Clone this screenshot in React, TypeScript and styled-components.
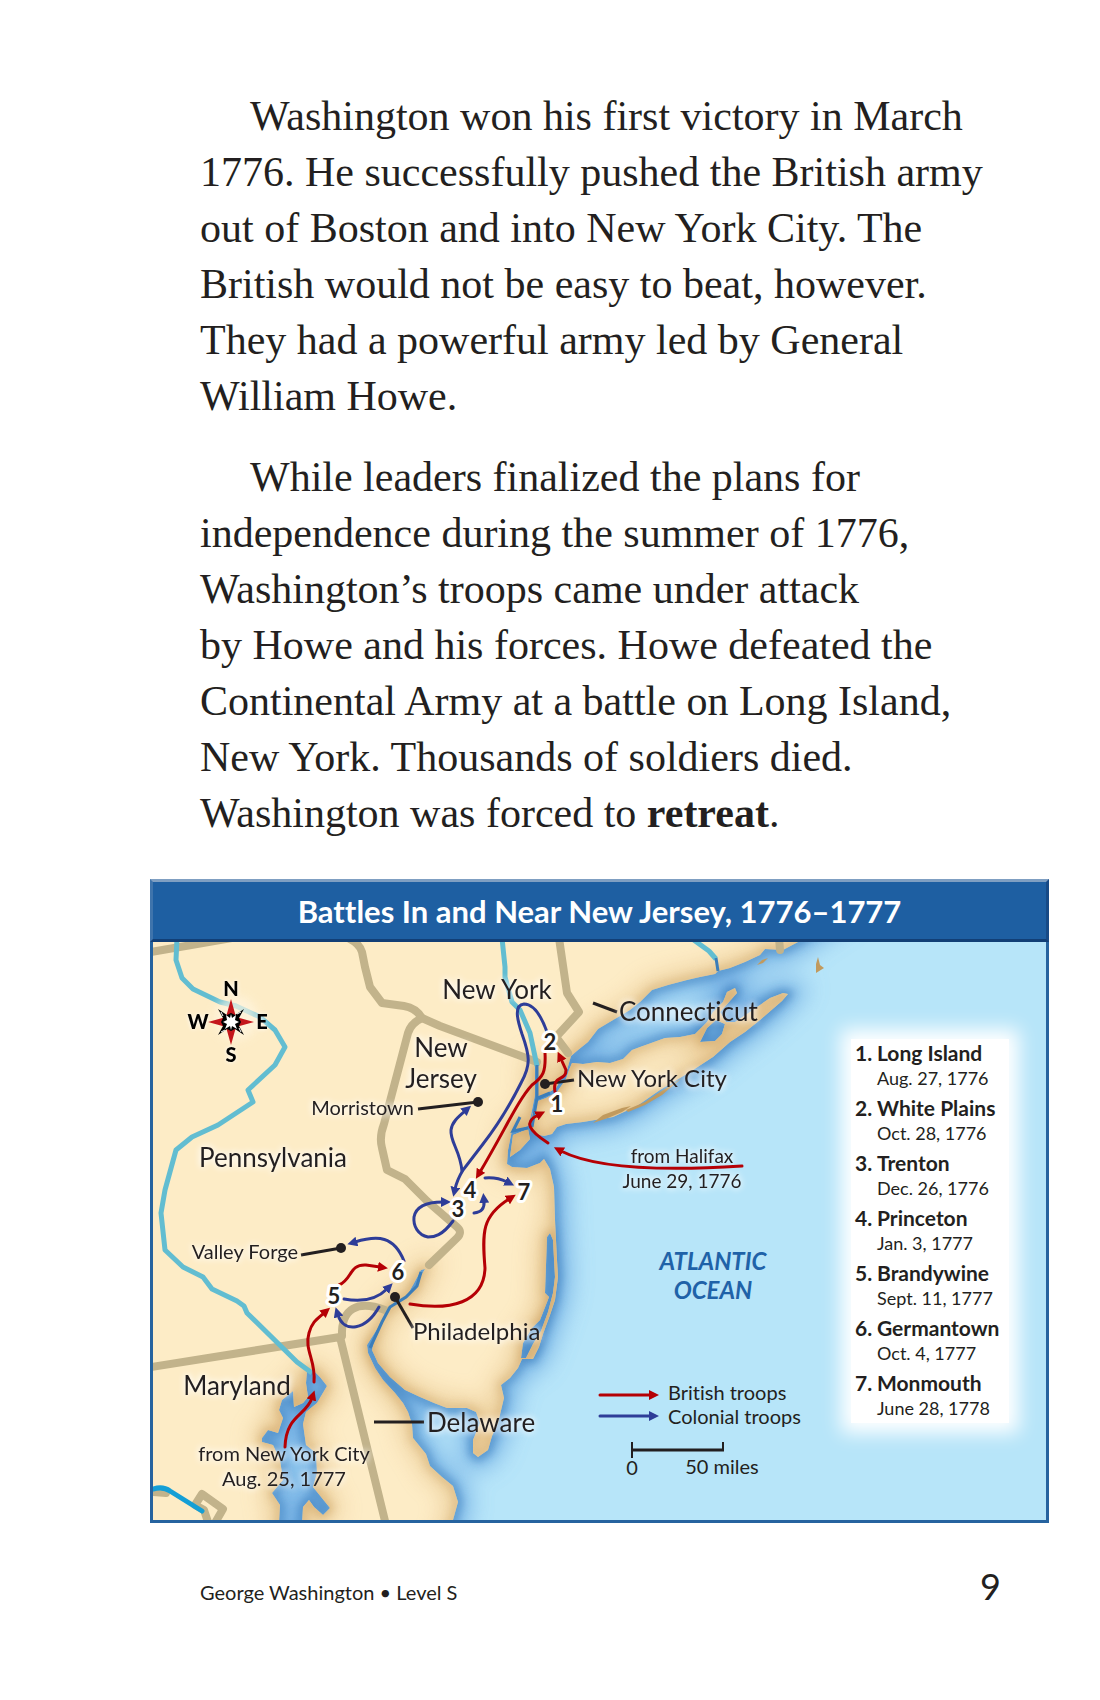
import React from "react";
import styled, { createGlobalStyle } from "styled-components";

const SANS = `Lato, "Open Sans", sans-serif`;
const INK = "#231f20";
const RED = "#b50005";
const BLUE = "#2e3d98";
const BORDER_TAN = "#c2b38b";
const RIVER = "#62bdd1";

const GlobalStyle = createGlobalStyle`
  body {
    margin: 0;
    background: #fff;
    color: ${INK};
    font-variant-ligatures: none;
  }
`;

const Page = styled.main`
  padding: 88px 51px 72px 150px;
`;

const Prose = styled.article`
  padding-left: 50px;
  font-family: "Liberation Serif", "Times New Roman", serif;
  font-size: 42px;
  line-height: 56px;
`;

const Paragraph = styled.p`
  margin: 0 0 25px;
  text-indent: 50px;
`;

const Figure = styled.figure`
  margin: 38px 0 0;
`;

const MapTitle = styled.figcaption`
  box-sizing: border-box;
  height: 63px;
  border-top: 3px solid #7f9fc2;
  border-left: 3px solid #3f74ac;
  border-right: 3px solid #174a86;
  border-bottom: 3px solid #123f76;
  background: #1e5fa2;
  color: #fff;
  font-family: ${SANS};
  font-size: 31px;
  font-weight: bold;
  line-height: 59px;
  text-align: center;
`;

const MapFrame = styled.div`
  display: grid;
  border: 3px solid #26639f;
  border-top: 0;
  background: #b7e5f9;
`;

const MapDrawing = styled.svg`
  grid-area: 1 / 1;
  display: block;
  width: 100%;
  height: auto;
`;

const Label = styled.text<{ $size?: number; $anchor?: string }>`
  font-family: ${SANS};
  font-size: ${(p) => p.$size ?? 26}px;
  text-anchor: ${(p) => p.$anchor ?? "middle"};
  fill: ${INK};
  filter: drop-shadow(0 0 3px rgba(255, 255, 255, 0.9)) drop-shadow(0 0 3px rgba(255, 255, 255, 0.6));
`;

const KeyText = styled.text<{ $anchor?: string }>`
  font-family: ${SANS};
  font-size: 20px;
  text-anchor: ${(p) => p.$anchor ?? "start"};
  fill: ${INK};
`;

const OceanText = styled.text`
  font-family: ${SANS};
  font-size: 24px;
  font-weight: bold;
  font-style: italic;
  text-anchor: middle;
  fill: #1f62a8;
`;

const BattleNumber = styled.text`
  font-family: ${SANS};
  font-size: 22px;
  font-weight: bold;
  text-anchor: middle;
  fill: ${INK};
  stroke: #fff;
  stroke-width: 6px;
  stroke-linejoin: round;
  paint-order: stroke;
`;

const CompassLetter = styled.text`
  font-family: ${SANS};
  font-size: 20px;
  font-weight: 900;
  text-anchor: middle;
  fill: #000;
  filter: drop-shadow(0 0 2px #fff);
`;

const BattleList = styled.ol`
  grid-area: 1 / 1;
  align-self: start;
  justify-self: end;
  box-sizing: border-box;
  width: 158px;
  margin: 97px 37px 0 0;
  padding: 0 0 4px 4px;
  display: grid;
  gap: 5px;
  list-style: none;
  background: #fff;
  box-shadow: 0 0 18px 10px #fff;
  color: ${INK};
`;

const Battle = styled.li`
  display: grid;
  grid-template-columns: 22px 1fr;
`;

const BattleName = styled.strong`
  font-family: ${SANS};
  font-size: 21px;
  line-height: 28px;
  white-space: nowrap;
`;

const BattleDate = styled.span`
  grid-column: 2;
  font-family: ${SANS};
  font-size: 18px;
  line-height: 22px;
  white-space: nowrap;
`;

const Footer = styled.footer`
  display: flex;
  justify-content: space-between;
  align-items: baseline;
  padding: 38px 48px 0 50px;
  font-family: ${SANS};
  font-size: 20px;
  line-height: 50px;
`;

const PageNumber = styled.span`
  font-size: 36px;
`;

const MAIN_LAND =
  "M100 900 L860 900 L798 942 L783 950 L765 949 L760 955 L745 962 L730 968 L718 971 L715 974 L700 977 L687 980 L668 985 L652 990 L640 1002 L630 1010 L620 1016 L608 1023 L598 1029 L588 1042 L578 1050 L571 1056 L567 1070 L563 1076 L556 1088 L546 1094 L538 1096 L538 1064 L535 1064 L535 1095 L531 1115 L528 1126 L514 1131 L520 1117 L512 1130 L508 1150 L507 1164 L512 1167 L527 1168 L540 1163 L544 1159 L550 1169 L554 1187 L555 1220 L557 1260 L558 1277 L555 1300 L550 1315 L543 1334 L539 1347 L533 1359 L522 1359 L518 1368 L510 1378 L501 1385 L504 1398 L498 1423 L492 1436 L488 1450 L478 1457 L473 1453 L473 1440 L480 1423 L476 1412 L467 1408 L447 1408 L434 1403 L420 1397 L405 1390 L390 1377 L378 1363 L372 1350 L375 1338 L383 1317 L392 1307 L404 1299 L416 1289 L419 1279 L425 1269 L421 1270 L413 1285 L406 1297 L396 1301 L386 1311 L379 1326 L367 1345 L368 1353 L375 1368 L383 1380 L395 1393 L403 1403 L408 1412 L412 1424 L413 1438 L426 1454 L430 1466 L442 1477 L453 1486 L458 1502 L453 1520 L440 1560 L100 1560 Z";

const CHESAPEAKE =
  "M307 1371 L313 1370 L320 1377 L327 1386 L317 1403 L306 1412 L303 1424 L306 1445 L316 1453 L317 1473 L313 1487 L330 1508 L323 1515 L314 1507 L309 1500 L303 1507 L300 1560 L277 1560 L280 1505 L272 1493 L283 1480 L280 1460 L273 1445 L262 1442 L262 1438 L268 1430 L278 1433 L283 1418 L279 1410 L282 1400 L293 1391 L294 1407 L303 1403 L308 1397 L306 1383 Z";

const BARNEGAT_BAY =
  "M547 1237 L550 1233 L553 1240 L555 1277 L553 1293 L548 1312 L541 1331 L533 1344 L526 1358 L521 1358 L523 1343 L532 1328 L540 1320 L549 1297 L545 1293 Z";

const LONG_ISLAND =
  "M538 1101 L546 1098 L557 1092 L566 1079 L569 1070 L572 1063 L583 1064 L597 1062 L610 1063 L623 1059 L632 1050 L640 1047 L665 1038 L680 1037 L695 1034 L707 1022 L713 1012 L723 1002 L727 992 L735 988 L737 993 L729 1002 L720 1012 L726 1022 L735 1022 L750 1012 L770 998 L783 993 L788 994 L782 1001 L760 1020 L745 1032 L730 1042 L713 1057 L690 1072 L660 1090 L637 1106 L613 1117 L583 1122 L566 1124 L557 1127 L552 1134 L544 1136 L535 1134 L531 1127 L532 1115 Z";

const PECONIC = "M700 1042 L707 1028 L716 1020 L725 1024 L722 1034 L715 1041 Z";

const STATEN_ISLAND = "M513 1135 L528 1129 L530 1139 L520 1150 L510 1157 Z";

const LAND = [MAIN_LAND, CHESAPEAKE, BARNEGAT_BAY, LONG_ISLAND, PECONIC, STATEN_ISLAND].join(" ");

const SANDBARS = [
  "M593 1123 L603 1115 L622 1108 L631 1106 L622 1112 L608 1118 Z",
  "M626 1110 L645 1102 L660 1092 L682 1078 L662 1095 L645 1105 L628 1112 Z",
  "M757 965 L762 960 L768 958 L763 963 Z",
  "M818 957 L820 965 L824 968 L816 973 L816 964 Z",
];

const BOUNDARIES = [
  "M145 953 L232 938",
  "M348 938 Q360 944 362 952 L365 967 L370 987 L382 1003 L404 1006 Q416 1008 422 1018 L440 1026 L537 1062",
  "M422 1018 Q411 1023 408 1033 L384 1124 Q379 1137 382 1148 L387 1170 L405 1179 L427 1201 L457 1227 Q463 1232 457 1238 L429 1265",
  "M559 938 L567 993 L579 1012 L556 1037 L568 1053",
  "M145 1368 L340 1337 L386 1525",
  "M342 1336 C341 1308 358 1300 385 1310",
  "M208 1522 L204 1510 L195 1505 L202 1494 L223 1509 L215 1523",
  "M153 1492 L166 1493",
  "M779 938 L780 950",
];

const RIVERS = [
  "M177 938 L176 960 L182 978 L193 989 L220 1002 L236 1006 L260 1017 L275 1030 L285 1047 L275 1065 L248 1090 L253 1102 L218 1125 L192 1137 L176 1150 L165 1190 L161 1213 L165 1250 L183 1267 L203 1277 L212 1289 L237 1301 L244 1306 L247 1313 L297 1362 L312 1373",
  "M502 938 L505 967 L505 977 L512 1002 L520 1010 L530 1033 L537 1066",
  "M691 938 L709 951 L716 959",
];

const BRITISH = [
  "M339 1285 C352 1280 349 1264 366 1265 L380 1267",
  "M314 1382 C316 1360 304 1350 309 1333 C312 1322 317 1319 324 1313",
  "M285 1447 C286 1415 306 1416 312 1398",
  "M410 1304 C450 1311 484 1303 485 1268 C482 1232 482 1216 509 1199",
  "M545 1053 C546 1072 543 1077 532 1085 C518 1100 505 1130 480 1172",
  "M555 1092 C552 1074 566 1082 566 1070 L561 1059",
  "M548 1143 C528 1130 524 1122 538 1115",
  "M742 1166 C680 1170 600 1171 561 1151",
  "M600 1395 L651 1395",
];

const COLONIAL = [
  "M547 1032 C542 1018 534 1004 524 1004 C513 1005 518 1022 522 1034 C530 1056 531 1065 521 1083 C505 1115 490 1135 483 1144 L463 1170 Q457 1180 455 1189",
  "M462 1171 C460 1150 450 1142 451 1130 C452 1122 458 1117 465 1111",
  "M485 1178 Q497 1177 507 1182",
  "M474 1213 Q485 1212 484 1201",
  "M453 1221 C442 1236 434 1237 428 1237 C418 1235 413 1226 414 1217 C416 1206 428 1202 443 1202",
  "M404 1261 C394 1236 378 1235 355 1242",
  "M344 1299 C365 1303 378 1298 387 1289",
  "M379 1307 C366 1330 344 1334 338 1315",
  "M600 1416 L651 1416",
];

const PLACES: { text: string; x: number; y: number; size?: number; anchor?: string }[] = [
  { text: "New York", x: 497, y: 999 },
  { text: "New", x: 441, y: 1057 },
  { text: "Jersey", x: 441, y: 1088 },
  { text: "Pennsylvania", x: 273, y: 1167 },
  { text: "Morristown", x: 414, y: 1115, size: 20, anchor: "end" },
  { text: "Connecticut", x: 619, y: 1021, anchor: "start" },
  { text: "New York City", x: 577, y: 1087, size: 24, anchor: "start" },
  { text: "from Halifax", x: 682, y: 1163, size: 19 },
  { text: "June 29, 1776", x: 682, y: 1188, size: 19 },
  { text: "Valley Forge", x: 298, y: 1259, size: 20, anchor: "end" },
  { text: "Philadelphia", x: 413, y: 1340, size: 24, anchor: "start" },
  { text: "Maryland", x: 237, y: 1395 },
  { text: "Delaware", x: 427, y: 1432, anchor: "start" },
  { text: "from New York City", x: 284, y: 1461, size: 20 },
  { text: "Aug. 25, 1777", x: 284, y: 1486, size: 20 },
];

const NUMBERS = [
  { n: 1, x: 557, y: 1112 },
  { n: 2, x: 550, y: 1050 },
  { n: 3, x: 458, y: 1217 },
  { n: 4, x: 470, y: 1198 },
  { n: 5, x: 334, y: 1304 },
  { n: 6, x: 398, y: 1280 },
  { n: 7, x: 524, y: 1200 },
];

const BATTLES = [
  ["Long Island", "Aug. 27, 1776"],
  ["White Plains", "Oct. 28, 1776"],
  ["Trenton", "Dec. 26, 1776"],
  ["Princeton", "Jan. 3, 1777"],
  ["Brandywine", "Sept. 11, 1777"],
  ["Germantown", "Oct. 4, 1777"],
  ["Monmouth", "June 28, 1778"],
];

function ArrowHead({ id, color }: { id: string; color: string }) {
  return (
    <marker id={id} markerUnits="userSpaceOnUse" markerWidth="12" markerHeight="12" refX="2" refY="5" orient="auto">
      <path d="M0 0 L10 5 L0 10 Z" fill={color} />
    </marker>
  );
}

function Compass() {
  return (
    <g>
      <circle cx="236" cy="1018" r="22" fill="#fff6e2" opacity="0.7" filter="url(#shore-near)" />
      <g transform="translate(231 1022)">
        <path d="M0 -23 L5 -5 L23 0 L5 5 L0 23 L-5 5 L-23 0 L-5 -5 Z" fill="#c4161c" />
        <path
          d="M0 -9 L4 -7 L13 -13 L8 -4 L10 0 L8 4 L13 13 L4 7 L0 9 L-4 7 L-13 13 L-8 4 L-10 0 L-8 -4 L-13 -13 L-4 -7 Z"
          fill="#000"
        />
        <path
          d="M0 -8 L1 -4 L5 -7 L4 -2 L8 0 L4 2 L6 7 L1 4 L0 8 L-1 4 L-6 7 L-4 2 L-8 0 L-4 -2 L-5 -7 L-1 -4 Z"
          fill="#fff"
        />
        <path d="M6 -8 L10 -10 M8 6 L10 10 M-6 8 L-10 10 M-8 -6 L-10 -10" stroke="#fff" strokeWidth="1" />
      </g>
      <CompassLetter x="231" y="996">N</CompassLetter>
      <CompassLetter x="231" y="1062">S</CompassLetter>
      <CompassLetter x="198" y="1029">W</CompassLetter>
      <CompassLetter x="262" y="1029">E</CompassLetter>
    </g>
  );
}

function CampaignMap() {
  return (
    <MapDrawing viewBox="153 942 893 578" role="img" aria-label="Map of battles in and near New Jersey">
      <defs>
        <ArrowHead id="head-british" color={RED} />
        <ArrowHead id="head-colonial" color={BLUE} />
        <filter id="shore-wide" x="-20%" y="-20%" width="140%" height="140%">
          <feGaussianBlur stdDeviation="12" />
        </filter>
        <filter id="shore-near" x="-40%" y="-40%" width="180%" height="180%">
          <feGaussianBlur stdDeviation="5" />
        </filter>
        <clipPath id="land-clip">
          <path d={LAND} clipRule="evenodd" />
        </clipPath>
      </defs>

      <rect x="153" y="942" width="893" height="578" fill="#b7e5f9" />
      <path d={LAND} fill="none" stroke="#5a9bdc" strokeWidth="24" opacity="0.7" filter="url(#shore-wide)" />
      <path d={LAND} fill="none" stroke="#2f72b4" strokeWidth="8" opacity="0.6" filter="url(#shore-near)" />

      <path d={LAND} fill="#fdecc6" fillRule="evenodd" />
      <g clipPath="url(#land-clip)">
        <path d={LAND} fill="none" stroke="#d6a863" strokeWidth="16" opacity="0.55" filter="url(#shore-wide)" />
        <path d={LAND} fill="none" stroke="#b98742" strokeWidth="5" opacity="0.5" filter="url(#shore-near)" />
      </g>
      {SANDBARS.map((d) => (
        <path key={d} d={d} fill="#c19a5e" />
      ))}

      <g fill="none" stroke={BORDER_TAN} strokeWidth="8" strokeLinejoin="round" strokeLinecap="round">
        {BOUNDARIES.map((d) => (
          <path key={d} d={d} />
        ))}
      </g>
      <g fill="none" stroke={RIVER} strokeWidth="5" strokeLinejoin="round">
        {RIVERS.map((d) => (
          <path key={d} d={d} />
        ))}
      </g>
      <path d="M153 1489 Q163 1486 170 1491 L202 1511" fill="none" stroke="#149fd6" strokeWidth="5" strokeLinecap="round" />
      <g fill="none" stroke="#3b7db9" strokeWidth="3">
        <path d="M537 1065 L537 1098 L532 1127" />
        <path d="M538 1098 L550 1093" />
        <path d="M716 958 L718 971" />
        <path d="M421 1272 L417 1286 L406 1297 L390 1307 L382 1322 L370 1348" />
        <path d="M520 1117 L513 1131 L528 1128" />
      </g>

      <g fill="none" stroke={INK} strokeWidth="3">
        <path d="M593 1003 L617 1012" />
        <path d="M545 1084 L574 1080" />
        <path d="M418 1109 L478 1102" />
        <path d="M301 1255 L341 1248" />
        <path d="M395 1297 L413 1328" />
        <path d="M374 1422 L424 1422" />
        <path d="M632 1450 L724 1450" />
      </g>
      <path d="M632 1442 L632 1458 M723 1442 L723 1450" fill="none" stroke={INK} strokeWidth="2" />
      <g fill={INK}>
        <circle cx="545" cy="1084" r="5" />
        <circle cx="478" cy="1102" r="5" />
        <circle cx="341" cy="1248" r="5" />
        <circle cx="395" cy="1297" r="5" />
      </g>

      <Compass />
      {PLACES.map((p) => (
        <Label key={p.text} x={p.x} y={p.y} $size={p.size} $anchor={p.anchor}>
          {p.text}
        </Label>
      ))}

      <g fill="none" stroke={RED} strokeWidth="3" strokeLinecap="round">
        {BRITISH.map((d) => (
          <path key={d} d={d} markerEnd="url(#head-british)" />
        ))}
      </g>
      <g fill="none" stroke={BLUE} strokeWidth="3" strokeLinecap="round">
        {COLONIAL.map((d) => (
          <path key={d} d={d} markerEnd="url(#head-colonial)" />
        ))}
      </g>
      {NUMBERS.map((b) => (
        <BattleNumber key={b.n} x={b.x} y={b.y}>
          {b.n}
        </BattleNumber>
      ))}

      <OceanText x="713" y="1270">ATLANTIC</OceanText>
      <OceanText x="713" y="1299">OCEAN</OceanText>
      <KeyText x="668" y="1400">British troops</KeyText>
      <KeyText x="668" y="1424">Colonial troops</KeyText>
      <KeyText x="632" y="1475" $anchor="middle">0</KeyText>
      <KeyText x="722" y="1474" $anchor="middle">50 miles</KeyText>
    </MapDrawing>
  );
}

export default function App() {
  return (
    <>
      <GlobalStyle />
      <Page>
        <Prose>
          <Paragraph>
            Washington won his first victory in March
            <br />
            1776. He successfully pushed the British army
            <br />
            out of Boston and into New York City. The
            <br />
            British would not be easy to beat, however.
            <br />
            They had a powerful army led by General
            <br />
            William Howe.
          </Paragraph>
          <Paragraph>
            While leaders finalized the plans for
            <br />
            independence during the summer of 1776,
            <br />
            Washington’s troops came under attack
            <br />
            by Howe and his forces. Howe defeated the
            <br />
            Continental Army at a battle on Long Island,
            <br />
            New York. Thousands of soldiers died.
            <br />
            Washington was forced to <strong>retreat</strong>.
          </Paragraph>
        </Prose>
        <Figure>
          <MapTitle>Battles In and Near New Jersey, 1776–1777</MapTitle>
          <MapFrame>
            <CampaignMap />
            <BattleList>
              {BATTLES.map(([name, date], i) => (
                <Battle key={name}>
                  <BattleName>{i + 1}.</BattleName>
                  <BattleName>{name}</BattleName>
                  <BattleDate>{date}</BattleDate>
                </Battle>
              ))}
            </BattleList>
          </MapFrame>
        </Figure>
        <Footer>
          <span>George Washington • Level S</span>
          <PageNumber>9</PageNumber>
        </Footer>
      </Page>
    </>
  );
}
